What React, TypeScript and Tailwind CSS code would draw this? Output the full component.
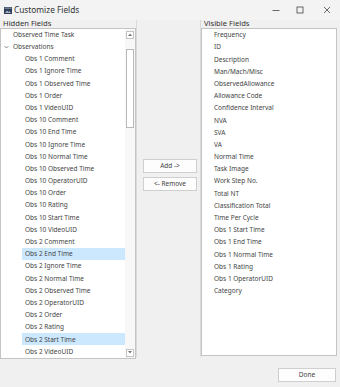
import React from "react";

const hidden: { t: string; lvl: number; sel?: boolean; group?: boolean }[] = [
  { t: "Observed Time Task", lvl: 0 },
  { t: "Observations", lvl: 0, group: true },
  { t: "Obs 1 Comment", lvl: 1 },
  { t: "Obs 1 Ignore Time", lvl: 1 },
  { t: "Obs 1 Observed Time", lvl: 1 },
  { t: "Obs 1 Order", lvl: 1 },
  { t: "Obs 1 VideoUID", lvl: 1 },
  { t: "Obs 10 Comment", lvl: 1 },
  { t: "Obs 10 End Time", lvl: 1 },
  { t: "Obs 10 Ignore Time", lvl: 1 },
  { t: "Obs 10 Normal Time", lvl: 1 },
  { t: "Obs 10 Observed Time", lvl: 1 },
  { t: "Obs 10 OperatorUID", lvl: 1 },
  { t: "Obs 10 Order", lvl: 1 },
  { t: "Obs 10 Rating", lvl: 1 },
  { t: "Obs 10 Start Time", lvl: 1 },
  { t: "Obs 10 VideoUID", lvl: 1 },
  { t: "Obs 2 Comment", lvl: 1 },
  { t: "Obs 2 End Time", lvl: 1, sel: true },
  { t: "Obs 2 Ignore Time", lvl: 1 },
  { t: "Obs 2 Normal Time", lvl: 1 },
  { t: "Obs 2 Observed Time", lvl: 1 },
  { t: "Obs 2 OperatorUID", lvl: 1 },
  { t: "Obs 2 Order", lvl: 1 },
  { t: "Obs 2 Rating", lvl: 1 },
  { t: "Obs 2 Start Time", lvl: 1, sel: true },
  { t: "Obs 2 VideoUID", lvl: 1 },
];

const visible = [
  "Frequency",
  "ID",
  "Description",
  "Man/Mach/Misc",
  "ObservedAllowance",
  "Allowance Code",
  "Confidence Interval",
  "NVA",
  "SVA",
  "VA",
  "Normal Time",
  "Task Image",
  "Work Step No.",
  "Total NT",
  "Classification Total",
  "Time Per Cycle",
  "Obs 1 Start Time",
  "Obs 1 End Time",
  "Obs 1 Normal Time",
  "Obs 1 Rating",
  "Obs 1 OperatorUID",
  "Category",
];

export default function App() {
  return (
    <div
      className="w-[340px] h-[387px] bg-[#f0f0f0] overflow-hidden flex flex-col text-[#444] text-[6.5px]"
      style={{ fontFamily: '"Noto Sans", "Liberation Sans", sans-serif' }}
    >
      {/* Title bar */}
      <div className="h-[20px] flex items-center bg-[#f3f3f3] relative">
        <svg className="ml-[4px]" width="8" height="7" viewBox="0 0 8 7">
          <rect x="0" y="0" width="8" height="7" fill="#2f3e55" />
          <rect x="0.5" y="0.5" width="7" height="1.3" fill="#7f8fa8" />
          <path d="M1 6 L3 3.5 L4.5 5 L5.5 4 L7 6 Z" fill="#a9b6c9" />
        </svg>
        <span className="ml-[2px] text-[8.3px] text-[#333]">Customize Fields</span>
        <div className="ml-auto flex items-center h-full">
          <svg width="8" height="8" viewBox="0 0 8 8" className="mr-[16px]">
            <line x1="0.5" y1="4.5" x2="7.5" y2="4.5" stroke="#444" strokeWidth="0.8" />
          </svg>
          <svg width="8" height="8" viewBox="0 0 8 8" className="mr-[19px]">
            <rect x="1" y="1" width="6" height="6" fill="none" stroke="#444" strokeWidth="0.8" />
          </svg>
          <svg width="8" height="8" viewBox="0 0 8 8" className="mr-[9px]">
            <path d="M1 1 L7 7 M7 1 L1 7" stroke="#444" strokeWidth="0.8" />
          </svg>
        </div>
      </div>

      {/* Body */}
      <div className="h-[337px] flex">
        {/* Left */}
        <div className="w-[137px] flex flex-col border-r border-[#dadada]">
          <div className="h-[8px] flex items-center pl-[3px] text-[#333] text-[7.6px] leading-none">Hidden Fields</div>
          <div className="flex-1 border border-[#c4c4c4] bg-white flex mb-[1px]">
            <div className="flex-1 flex flex-col">
              {hidden.map((h) => (
                <div key={h.t} className="h-[12.2px] flex items-center relative">
                  {h.group && (
                    <svg className="absolute left-[3px]" width="5" height="4" viewBox="0 0 5 4">
                      <path d="M0.5 1 L2.5 3 L4.5 1" fill="none" stroke="#666" strokeWidth="0.7" />
                    </svg>
                  )}
                  {h.lvl === 0 ? (
                    <span className="pl-[12px] whitespace-nowrap">{h.t}</span>
                  ) : (
                    <span
                      className={`ml-[21px] pl-[3px] flex-1 h-full flex items-center whitespace-nowrap ${
                        h.sel ? "bg-[#cce8ff]" : ""
                      }`}
                    >
                      {h.t}
                    </span>
                  )}
                </div>
              ))}
            </div>
            {/* scrollbar */}
            <div className="w-[10px] flex flex-col items-center pt-[2px] pb-[1px] bg-[#f7f7f7]">
              <div className="w-[8px] h-[8px] border border-[#c4c4c4] bg-white flex items-center justify-center">
                <svg width="4" height="3" viewBox="0 0 4 3">
                  <path d="M0 3 L2 0.5 L4 3 Z" fill="#777" />
                </svg>
              </div>
              <div className="w-[8px] h-[79px] mt-[10px] border border-[#b9b9b9] bg-white" />
              <div className="flex-1" />
              <div className="w-[8px] h-[8px] border border-[#c4c4c4] bg-white flex items-center justify-center">
                <svg width="4" height="3" viewBox="0 0 4 3">
                  <path d="M0 0 L2 2.5 L4 0 Z" fill="#777" />
                </svg>
              </div>
            </div>
          </div>
        </div>

        {/* Middle */}
        <div className="w-[63px] flex flex-col items-center pt-[139px] gap-[4px] pl-[3px]">
          <button className="w-[54px] h-[14px] bg-[#fdfdfd] border border-[#cfcfcf] text-[6.5px] text-[#444] flex items-center justify-center">
            Add -&gt;
          </button>
          <button className="w-[54px] h-[14px] bg-[#fdfdfd] border border-[#cfcfcf] text-[6.5px] text-[#444] flex items-center justify-center">
            &lt;- Remove
          </button>
        </div>

        {/* Right */}
        <div className="w-[137px] flex flex-col border-l border-[#dadada]">
          <div className="h-[8px] flex items-center pl-[3px] text-[#333] text-[7.6px] leading-none">Visible Fields</div>
          <div className="flex-1 border border-[#c4c4c4] bg-white flex flex-col mb-[1px]">
            {visible.map((v) => (
              <div key={v} className="h-[12.2px] flex items-center pl-[12px] whitespace-nowrap">
                {v}
              </div>
            ))}
          </div>
        </div>
      </div>

      {/* Footer */}
      <div className="flex-1 flex justify-end items-start pt-[11px] pr-[4px]">
        <button className="w-[58px] h-[14px] bg-[#fdfdfd] border border-[#cfcfcf] text-[6.5px] text-[#444] flex items-center justify-center">
          Done
        </button>
      </div>
    </div>
  );
}
